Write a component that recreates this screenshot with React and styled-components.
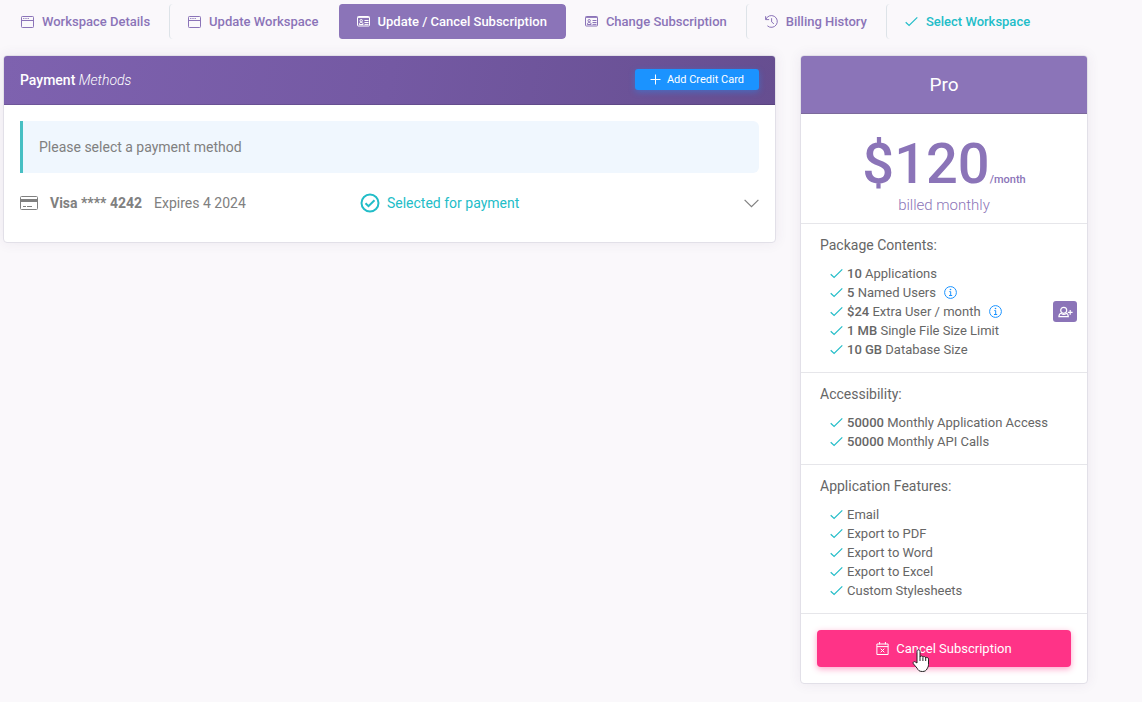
/* eslint-disable react/prop-types */
import React from 'react';
import styled, { createGlobalStyle, css } from 'styled-components';

const PURPLE = '#8b74b8';
const TEAL = '#22bdc8';
const BLUE = '#1b93ff';
const PINK = '#ff3387';
const LINE = '#e6e6ea';

const GlobalStyle = createGlobalStyle`
  * {
    box-sizing: border-box;
  }

  body {
    margin: 0;
    background: #faf8fb;
    color: #666666;
    font-family: Roboto, 'Liberation Sans', sans-serif;
    font-size: 13px;
  }
`;

const Page = styled.main`
  padding: 4px 54px 18px 3px;
`;

const Tabs = styled.nav`
  display: flex;
  margin-bottom: 16px;
`;

const Tab = styled.a`
  display: flex;
  align-items: center;
  gap: 8px;
  height: 35px;
  padding: 0 19px 0 18px;
  border-left: 1px solid ${props => (props.$divider ? '#dde3e8' : 'transparent')};
  border-radius: 4px;
  color: ${props => props.$color || PURPLE};
  font-weight: 500;
  line-height: 20px;
  text-decoration: none;
  white-space: nowrap;

  &:first-child {
    border-left: 0;
  }

  ${props =>
    props.$active &&
    css`
      background: ${PURPLE};
      background-clip: padding-box;
      color: #ffffff;
    `}
`;

const Columns = styled.div`
  display: grid;
  grid-template-columns: minmax(0, 1fr) 288px;
  align-items: start;
  gap: 24px;
`;

const Panel = styled.section`
  overflow: hidden;
  border: 1px solid #e2e0e8;
  border-radius: 4px;
  background: #ffffff;
  background-clip: padding-box;
`;

const Shadow = styled.div`
  border-radius: 4px;
  box-shadow: 0 0 13px rgba(74, 53, 107, 0.08);
`;

const PanelHeader = styled.header`
  display: flex;
  align-items: center;
  justify-content: space-between;
  height: 49px;
  padding: 0 16px 1px;
  border-bottom: 1px solid rgba(0, 0, 0, 0.12);
  background: linear-gradient(100deg, #7e62af, #7459a3 50%, #664e90);
  color: #ffffff;
`;

const PanelTitle = styled.h2`
  margin: 0;
  font-size: 14px;
  font-weight: 500;

  em {
    font-weight: 300;
  }
`;

const AddButton = styled.button`
  display: flex;
  align-items: center;
  gap: 6px;
  height: 21px;
  padding: 0 15px;
  border: 0;
  border-radius: 3px;
  background: ${BLUE};
  box-shadow: 0 2px 6px rgba(27, 147, 255, 0.4);
  color: #ffffff;
  font-family: inherit;
  font-size: 11px;
`;

const PanelBody = styled.div`
  padding: 16px;
  color: #808080;
  font-size: 14px;
  line-height: 20px;
`;

const Notice = styled.p`
  margin: 0 0 16px;
  padding: 16px;
  border-left: 3px solid #47bfc3;
  border-radius: 0 6px 6px 0;
  background: #f0f7fe;
`;

const MethodRow = styled.div`
  display: grid;
  grid-template-columns: 46% 1fr auto;
  align-items: center;
  height: 28px;
  margin-bottom: 9px;
`;

const Card = styled.div`
  display: flex;
  align-items: center;
  gap: 12px;

  strong {
    font-weight: 700;
  }
`;

const Selected = styled.div`
  display: flex;
  align-items: center;
  gap: 7px;
  color: ${TEAL};
`;

const IconButton = styled.button`
  display: flex;
  padding: 0;
  border: 0;
  background: none;
  color: inherit;
`;

const PlanName = styled.h2`
  margin: 0;
  border-bottom: 1px solid #7c6a9c;
  background: ${PURPLE};
  color: #ffffff;
  font-size: 19px;
  font-weight: 400;
  line-height: 57px;
  text-align: center;
`;

const Price = styled.div`
  padding: 20px 0 7px;
  color: ${PURPLE};
  text-align: center;
`;

const Amount = styled.div`
  font-size: 56px;
  font-weight: 500;
  line-height: 60px;

  small {
    font-size: 11px;
    line-height: 12px;
  }
`;

const Billed = styled.div`
  font-size: 15px;
  font-weight: 300;
  line-height: 22px;
`;

const Section = styled.section`
  padding: 11px 10px 13px 19px;
  border-top: 1px solid ${LINE};
`;

const SectionTitle = styled.h3`
  margin: 0 0 9px;
  font-size: 14px;
  font-weight: 400;
  line-height: 20px;
`;

const Features = styled.ul`
  margin: 0;
  padding: 0 0 0 10px;
  list-style: none;
`;

const Feature = styled.li`
  display: flex;
  align-items: center;
  gap: 4px;
  height: 19px;

  strong {
    font-weight: 500;
  }
`;

const InfoButton = styled(IconButton)`
  margin-left: 4px;
  color: ${BLUE};
`;

const AddUserButton = styled.button`
  display: flex;
  align-items: center;
  justify-content: center;
  width: 24px;
  height: 21px;
  margin-left: auto;
  padding: 0;
  border: 0;
  border-radius: 3px;
  background: ${PURPLE};
  color: #ffffff;
`;

const Footer = styled.footer`
  padding: 16px;
  border-top: 1px solid ${LINE};
`;

const CancelButton = styled.button`
  position: relative;
  display: flex;
  align-items: center;
  justify-content: center;
  gap: 7px;
  width: 100%;
  height: 37px;
  padding: 0;
  border: 0;
  border-radius: 4px;
  background: ${PINK};
  box-shadow: 0 2px 6px rgba(255, 51, 135, 0.45);
  color: #ffffff;
  font-family: inherit;
  font-size: 13px;
`;

const Pointer = styled.svg`
  position: absolute;
  top: 19px;
  left: calc(50% - 32px);
`;

function Icon({ width = 13, height = 13, box, stroke = 1, color, children }) {
  return (
    <svg
      width={width}
      height={height}
      viewBox={box || `0 0 ${width} ${height}`}
      fill="none"
      stroke={color || 'currentColor'}
      strokeWidth={stroke}
      aria-hidden="true"
    >
      {children}
    </svg>
  );
}

const WindowIcon = () => (
  <Icon>
    <rect x="0.5" y="1.5" width="12" height="11" rx="0.8" />
    <path d="M0.5 5.5h12M2.2 3.5h1.2M4.4 3.5h1.2M6.6 3.5h1.2" />
  </Icon>
);

const IdCardIcon = () => (
  <Icon>
    <rect x="0.5" y="1.5" width="12" height="9.5" rx="0.8" />
    <path d="M1 2.4h11M7.5 5.5h4M7.5 7.5h4M2.3 9.5c0-1.6.8-2 1.9-2s1.9.4 1.9 2zM7.5 9.4h4" />
    <circle cx="4.2" cy="5.7" r="1.2" />
  </Icon>
);

const HistoryIcon = () => (
  <Icon>
    <path d="M.6 1.2v3.4h3.5M.9 4.3A5.9 5.9 0 1 1 2.4 10.8M6.6 3.2v3.7l2.3 1.9" />
  </Icon>
);

const CheckIcon = () => (
  <Icon color={TEAL} stroke={1.2}>
    <path d="M.7 7.3l3.4 3.2 8.2-8.2" />
  </Icon>
);

const InfoIcon = () => (
  <Icon>
    <circle cx="6.5" cy="6.5" r="5.9" />
    <path d="M5.3 5.6h1.4v3.9M5 9.5h3.2" />
    <circle cx="6.5" cy="3.5" r="0.8" fill="currentColor" stroke="none" />
  </Icon>
);

const tabs = [
  { label: 'Workspace Details', icon: WindowIcon },
  { label: 'Update Workspace', icon: WindowIcon, divider: true },
  { label: 'Update / Cancel Subscription', icon: IdCardIcon, active: true },
  { label: 'Change Subscription', icon: IdCardIcon },
  { label: 'Billing History', icon: HistoryIcon, divider: true },
  { label: 'Select Workspace', icon: CheckIcon, divider: true, color: TEAL }
];

const sections = [
  {
    title: 'Package Contents:',
    items: [
      { value: '10', text: 'Applications' },
      { value: '5', text: 'Named Users', info: true },
      { value: '$24', text: 'Extra User / month', info: true, addUser: true },
      { value: '1 MB', text: 'Single File Size Limit' },
      { value: '10 GB', text: 'Database Size' }
    ]
  },
  {
    title: 'Accessibility:',
    items: [
      { value: '50000', text: 'Monthly Application Access' },
      { value: '50000', text: 'Monthly API Calls' }
    ]
  },
  {
    title: 'Application Features:',
    items: [
      { text: 'Email' },
      { text: 'Export to PDF' },
      { text: 'Export to Word' },
      { text: 'Export to Excel' },
      { text: 'Custom Stylesheets' }
    ]
  }
];

function PaymentMethods() {
  return (
    <Shadow>
      <Panel>
        <PanelHeader>
          <PanelTitle>
            Payment <em>Methods</em>
          </PanelTitle>
          <AddButton type="button">
            <Icon width={11} height={11}>
              <path d="M5.5 .5v10M.5 5.5h10" />
            </Icon>
            Add Credit Card
          </AddButton>
        </PanelHeader>
        <PanelBody>
          <Notice>Please select a payment method</Notice>
          <MethodRow>
            <Card>
              <Icon width={18} height={14}>
                <rect x="0.5" y="0.5" width="17" height="13" rx="1" />
                <path d="M1 4.5h16" strokeWidth="3" />
                <path d="M3 10.5h3M7 10.5h5" />
              </Icon>
              <strong>Visa **** 4242</strong>
              <span>Expires 4 2024</span>
            </Card>
            <Selected>
              <Icon width={20} height={20} stroke={2}>
                <circle cx="10" cy="10" r="8.5" />
                <path d="M5.5 10.2l3 3 6-6" />
              </Icon>
              Selected for payment
            </Selected>
            <IconButton type="button" aria-label="Show card details">
              <Icon width={15} height={9} stroke={1.2}>
                <path d="M.6 .8l6.9 6.9 6.9-6.9" />
              </Icon>
            </IconButton>
          </MethodRow>
        </PanelBody>
      </Panel>
    </Shadow>
  );
}

function FeatureItem({ value, text, info, addUser }) {
  return (
    <Feature>
      <CheckIcon />
      <span>
        {value && <strong>{value} </strong>}
        {text}
      </span>
      {info && (
        <InfoButton type="button" aria-label={`About ${text}`}>
          <InfoIcon />
        </InfoButton>
      )}
      {addUser && (
        <AddUserButton type="button" aria-label="Add user">
          <Icon width={15} height={12} stroke={1.2}>
            <circle cx="5.7" cy="4.3" r="3" />
            <path d="M3.6 7C1.6 7.6.9 8.5.9 10.7h9.4c0-2.2-.6-3.1-2.5-3.7M3.5 7.6c1.2 1.2 3.3 1.2 4.5 0M9.8 6.3h4.8M12.2 3.9v4.8" />
          </Icon>
        </AddUserButton>
      )}
    </Feature>
  );
}

function Plan() {
  return (
    <Shadow>
      <Panel>
        <PlanName>Pro</PlanName>
        <Price>
          <Amount>
            $120<small>/month</small>
          </Amount>
          <Billed>billed monthly</Billed>
        </Price>
        {sections.map(section => (
          <Section key={section.title}>
            <SectionTitle>{section.title}</SectionTitle>
            <Features>
              {section.items.map(item => (
                <FeatureItem key={item.text} {...item} />
              ))}
            </Features>
          </Section>
        ))}
        <Footer>
          <CancelButton type="button">
            <Icon>
              <path d="M.9 2h11.2v10.5H.9zM.9 4.6h11.2M3.6 0v2.4M9.4 0v2.4M4.7 6.7l3.6 3.6M8.3 6.7l-3.6 3.6" />
            </Icon>
            Cancel Subscription
            <Pointer width="18" height="24" viewBox="0 0 18 24" aria-hidden="true">
              <path
                d="M5 14V2.3C5 .3 8 .3 8 2.3V8c.3-1.5 2.8-1.3 2.9.3.6-1.2 2.7-.9 2.8.6.8-1 2.8-.5 2.8 1.2v5.4c0 2-.7 3-1.5 4.4-.8 1.7-2.1 2.6-4.6 2.6-3.4 0-4.3-1.4-5.3-3.3L1.3 14.7c-.8-1.6 1-2.8 2.2-1.6z"
                fill="#ffffff"
                stroke="#222222"
                strokeLinejoin="round"
              />
              <path d="M8 8v4M10.9 8.5V12M13.7 9v3" fill="none" stroke="#222222" />
            </Pointer>
          </CancelButton>
        </Footer>
      </Panel>
    </Shadow>
  );
}

function App() {
  return (
    <>
      <GlobalStyle />
      <Page>
        <Tabs>
          {tabs.map(({ label, icon: TabIcon, active, divider, color }) => (
            <Tab
              key={label}
              href="#"
              $active={active}
              $divider={divider}
              $color={color}
              aria-current={active ? 'page' : undefined}
            >
              <TabIcon />
              {label}
            </Tab>
          ))}
        </Tabs>
        <Columns>
          <PaymentMethods />
          <Plan />
        </Columns>
      </Page>
    </>
  );
}

export default App;
